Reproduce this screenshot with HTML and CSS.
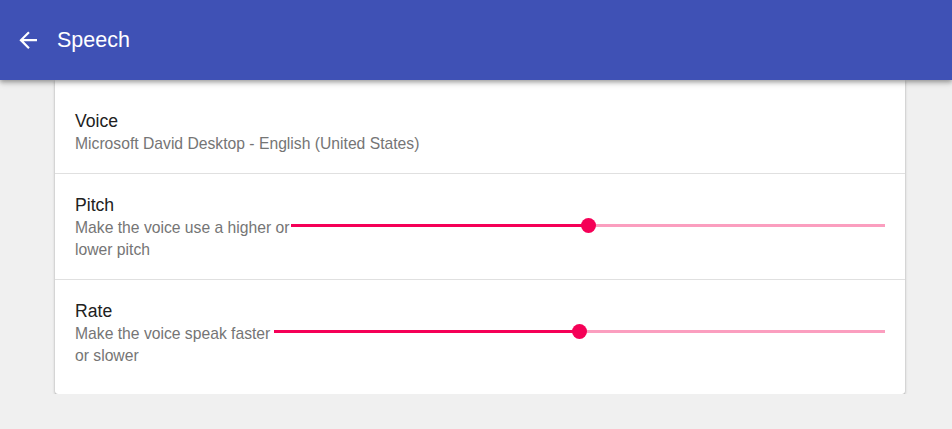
FILE: index.html
```html
<!DOCTYPE html>
<html lang="en">
<head>
<meta charset="utf-8">
<title>Speech</title>
<link rel="stylesheet" href="styles.css">
</head>
<body>
<header class="appbar">
  <svg class="back" viewBox="0 0 24 24" aria-hidden="true"><path d="M20 11H7.83l5.59-5.59L12 4l-8 8 8 8 1.41-1.41L7.83 13H20v-2z"/></svg>
  <h1 class="title">Speech</h1>
</header>
<main class="card">
  <section class="row row-first">
    <div class="label">
      <div class="name">Voice</div>
      <div class="desc">Microsoft David Desktop - English (United States)</div>
    </div>
  </section>
  <section class="row">
    <div class="label label-pitch">
      <div class="name">Pitch</div>
      <div class="desc">Make the voice use a higher or lower pitch</div>
    </div>
    <div class="slider">
      <div class="track"><div class="active" style="width:50%"></div></div>
      <div class="thumb" style="left:50%"></div>
    </div>
  </section>
  <section class="row row-last">
    <div class="label label-rate">
      <div class="name">Rate</div>
      <div class="desc">Make the voice speak faster or slower</div>
    </div>
    <div class="slider">
      <div class="track"><div class="active" style="width:50%"></div></div>
      <div class="thumb" style="left:50%"></div>
    </div>
  </section>
</main>
</body>
</html>
```
FILE: styles.css
```css
html, body {
  margin: 0;
  padding: 0;
  background: #f0f0f0;
  font-family: "Liberation Sans", Arial, sans-serif;
}
.appbar {
  position: relative;
  z-index: 2;
  height: 80px;
  background: #3f51b5;
  display: flex;
  align-items: center;
  padding-left: 15px;
  box-shadow: 0 2px 4px rgba(0,0,0,0.28), 0 4px 6px rgba(0,0,0,0.12);
}
.back {
  width: 26.4px;
  height: 26.4px;
  fill: #fff;
  flex: none;
}
.title {
  margin: 0 0 0 15.6px;
  font-size: 21.5px;
  font-weight: 400;
  color: #fff;
}
.card {
  position: relative;
  z-index: 1;
  width: 850px;
  margin: 0 0 0 55px;
  background: #fff;
  border-radius: 0 0 3px 3px;
  padding-bottom: 9px;
  box-shadow: 0 1px 3px rgba(0,0,0,0.28), 0 1px 1px rgba(0,0,0,0.12);
  display: block;
}
.row {
  display: flex;
  align-items: center;
  padding: 20px 20px 18px 20px;
  border-bottom: 1px solid #e0e0e0;
}
.row-first {
  padding-top: 30px;
}
.row-last {
  border-bottom: none;
}
.label {
  flex: none;
}
.label-pitch { width: 216px; }
.label-rate { width: 199px; }
.name {
  font-size: 17.6px;
  line-height: 22px;
  color: #212121;
}
.desc {
  margin-top: 1px;
  font-size: 15.7px;
  line-height: 22px;
  color: #757575;
}
.slider {
  position: relative;
  flex: 1;
  height: 15px;
  margin-bottom: 4px;
  display: flex;
  align-items: center;
}
.track {
  width: 100%;
  height: 3px;
  background: rgba(245,0,87,0.38);
  display: flex;
}
.active {
  height: 3px;
  background: #f50057;
}
.thumb {
  position: absolute;
  top: 0;
  width: 15px;
  height: 15px;
  margin-left: -7.5px;
  border-radius: 50%;
  background: #f50057;
}
```
